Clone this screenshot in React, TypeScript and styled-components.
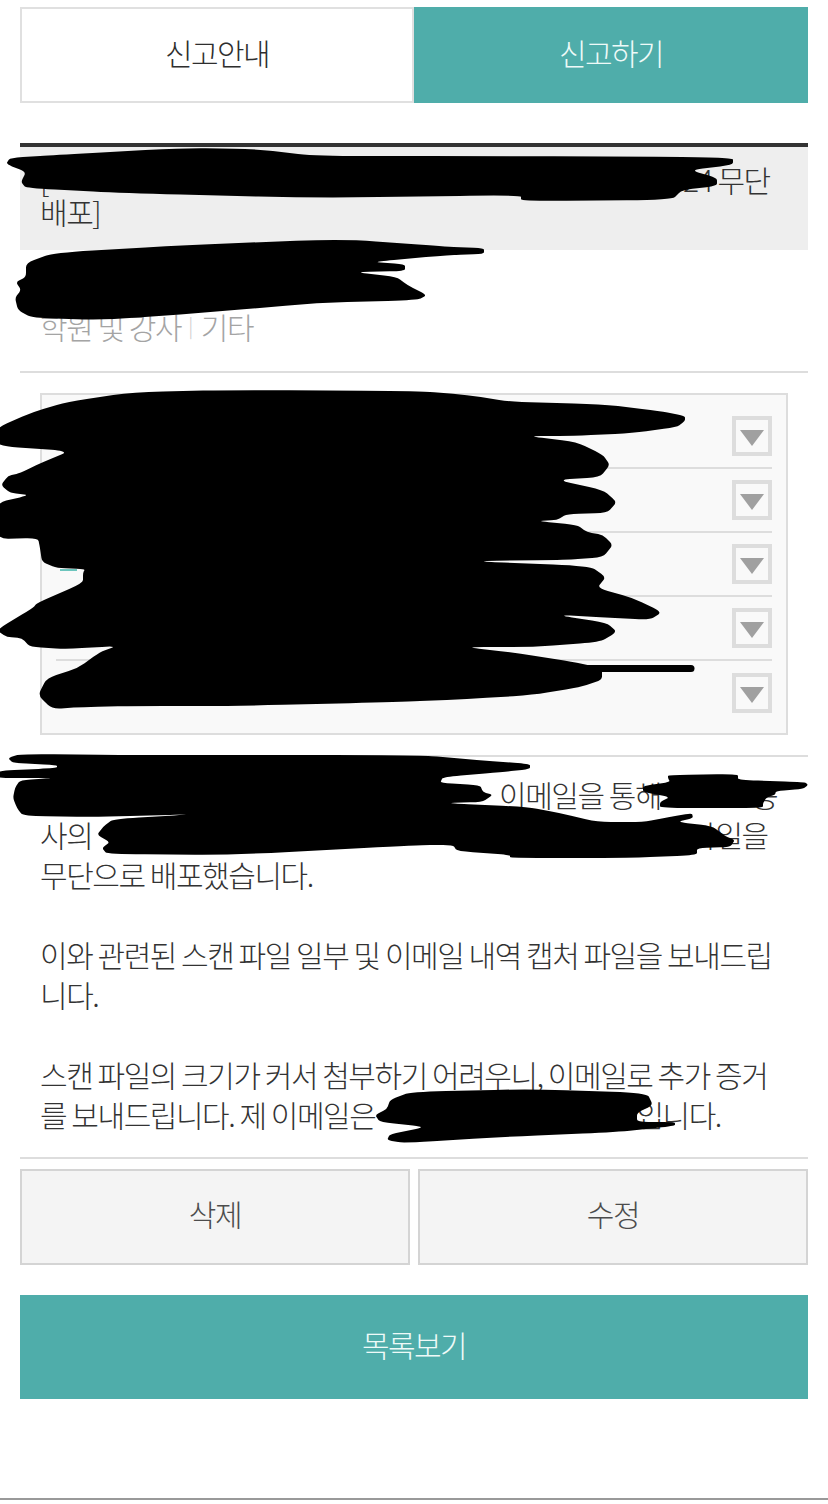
import styled, { createGlobalStyle } from "styled-components";

const GlobalStyle = createGlobalStyle`
  html, body {
    margin: 0;
    padding: 0;
    background: #fff;
  }
  * {
    box-sizing: border-box;
  }
`;

const Page = styled.div`
  position: relative;
  width: 828px;
  height: 1504px;
  overflow: hidden;
  padding: 7px 20px 0;
  display: flex;
  flex-direction: column;
  font-family: "Noto Sans CJK KR", "Noto Sans", sans-serif;
  font-weight: 300;
  color: #333;
  letter-spacing: -1.45px;
`;
const Tabs = styled.div`
  display: grid;
  grid-template-columns: 394px 394px;
  height: 96px;
`;
const Tab = styled.div<{ $active?: boolean }>`
  display: flex;
  align-items: center;
  justify-content: center;
  padding-bottom: 7px;
  font-size: 30px;
  letter-spacing: -1.6px;
  background: ${(p) => (p.$active ? "#4fadaa" : "#fff")};
  color: ${(p) => (p.$active ? "#eefaf8" : "#2e2e2e")};
  border: ${(p) => (p.$active ? "none" : "2px solid #e0e0e0")};
`;
const Title = styled.div`
  margin-top: 40px;
  height: 107px;
  border-top: 4px solid #333;
  background: #eee;
  padding: 16px 20px 0;
  font-size: 30px;
  line-height: 32px;
  white-space: nowrap;
`;
const Meta = styled.div`
  height: 123px;
  display: flex;
  align-items: flex-end;
  padding: 0 20px 25px;
  border-bottom: 2px solid #ddd;
  font-size: 30px;
  line-height: 40px;
  color: #a4a4a4;
`;
const Pipe = styled.span`
  margin: 0 9px 0 7px;
  font-size: 20px;
  vertical-align: 3px;
  color: #ccc;
`;
const SelectBox = styled.div`
  margin: 20px 20px 0;
  height: 342px;
  padding: 10px 14px 0;
  background: #f9f9f9;
  border: 2px solid #ddd;
`;
const SelectRow = styled.div<{ $last?: boolean }>`
  height: 64px;
  display: flex;
  align-items: center;
  justify-content: space-between;
  border-bottom: ${(p) => (p.$last ? "none" : "2px solid #ddd")};
`;
const RowMark = styled.span<{ $show?: boolean }>`
  width: 17px;
  height: 2px;
  margin: 12px 0 0 4px;
  background: ${(p) => (p.$show ? "#6cc5bd" : "transparent")};
`;
const Arrow = styled.div`
  width: 40px;
  height: 40px;
  display: flex;
  align-items: center;
  justify-content: center;
  border: 4px solid #ddd;
  &::after {
    content: "";
    border-left: 12px solid transparent;
    border-right: 12px solid transparent;
    border-top: 16px solid #a0a0a0;
    margin-top: 3px;
  }
`;
const Body = styled.div`
  margin-top: 20px;
  padding: 17px 20px 23px;
  border-top: 2px solid #ddd;
  border-bottom: 2px solid #ddd;
  font-size: 30px;
  line-height: 40px;
  white-space: nowrap;
`;
const Masked = styled.span<{ $w: number }>`
  display: inline-block;
  width: ${(p) => p.$w}px;
`;
const Actions = styled.div`
  margin-top: 10px;
  display: grid;
  grid-template-columns: 390px 390px;
  gap: 8px;
`;
const ActionButton = styled.div`
  height: 96px;
  display: flex;
  align-items: center;
  justify-content: center;
  padding-bottom: 8px;
  background: #f4f4f4;
  border: 2px solid #d4d4d4;
  font-size: 30px;
  color: #4c4c4c;
`;
const ListButton = styled.div`
  margin-top: 30px;
  height: 104px;
  display: flex;
  align-items: center;
  justify-content: center;
  padding-bottom: 7px;
  background: #4fadaa;
  color: #eefaf8;
  font-size: 30px;
  letter-spacing: -1.6px;
`;
const BottomRule = styled.div`
  position: absolute;
  left: 0;
  right: 0;
  top: 1498px;
  height: 2px;
  background: #999;
`;
const Scribbles = styled.svg`
  position: absolute;
  top: 0;
  left: 0;
  pointer-events: none;
`;

// marker scribbles, traced from the screenshot as x,y pairs
const blobs: number[][] = [
  // title
  [733,157, 476,156, 317,156, 254,149, 185,148, 53,155, 10,158, 6,164, 26,172, 21,182, 26,188, 122,193, 317,198, 521,195, 521,201, 672,200, 682,190, 717,186, 717,178, 690,170, 733,165],
  // meta
  [484,248, 450,247, 344,239, 185,245, 53,253, 26,263, 26,277, 16,282, 21,290, 15,298, 18,310, 32,318, 106,320, 212,312, 317,303, 418,300, 427,295, 407,285, 397,277, 354,272, 405,271, 405,264, 370,262, 450,255, 484,254],
  // select box
  [-4,428, 33,412, 67,402, 133,392, 233,390, 420,391, 467,395, 513,402, 600,404, 660,411, 685,416, 685,421, 677,427, 633,433, 573,436, 527,436, 577,442, 603,455, 610,465, 600,477, 557,480, 603,490, 617,502, 607,513, 567,514, 557,520, 537,521, 577,525, 587,532, 603,535, 613,545, 603,557, 567,560, 467,561, 590,566, 606,577, 597,588, 633,598, 662,612, 650,620, 600,617, 557,615, 607,623, 617,632, 600,642, 533,647, 463,647, 517,653, 573,662, 602,668, 602,680, 580,687, 533,695, 467,699, 400,702, 233,706, 133,706, 83,707, 52,709, 38,695, 47,678, 78,668, 100,652, 117,646, 67,649, 30,647, 22,638, 7,637, -4,630, 33,608, 37,603, 83,583, 83,573, 85,569, 57,568, 42,562, 40,548, 38,538, -4,539, -4,503, 30,495, 10,493, 1,485, 8,476, 20,473, 43,462, 70,451, -4,446],
  // body, left part
  [8,758, 20,754, 133,755, 420,755, 477,760, 530,764, 530,769, 503,772, 443,777, 440,783, 480,785, 483,792, 493,795, 482,802, 443,803, 527,807, 560,813, 597,822, 643,822, 670,817, 692,813, 693,818, 677,822, 712,826, 725,836, 735,840, 730,847, 697,848, 697,855, 630,858, 510,858, 510,855, 457,851, 453,845, 420,845, 233,855, 107,854, 102,848, 110,842, 97,835, 103,827, 113,819, 200,814, 100,817, 23,816, 17,808, 13,798, 15,788, 20,780, 57,778, -4,778, -4,771, 57,768, 57,765, 13,763],
  // body, right part
  [668,775, 738,774, 738,780, 805,782, 808,785, 803,789, 776,791, 775,795, 767,797, 763,803, 763,808, 660,808, 660,802, 670,797, 643,792, 643,786, 670,782, 668,778],
  // email
  [390,1100, 410,1092, 530,1089, 647,1093, 653,1105, 637,1113, 637,1122, 675,1122, 675,1126, 617,1132, 503,1137, 403,1143, 387,1140, 390,1134, 427,1127, 380,1122, 375,1115, 387,1109],
];

// rounds each corner with a short quadratic curve, straight in between
function smoothPath(pts: number[]) {
  const n = pts.length / 2;
  const t = 0.3;
  const at = (i: number, axis: number) => pts[((i + n) % n) * 2 + axis];
  let d = "";
  for (let i = 0; i < n; i++) {
    const x = at(i, 0);
    const y = at(i, 1);
    const inX = x + (at(i - 1, 0) - x) * t;
    const inY = y + (at(i - 1, 1) - y) * t;
    const outX = x + (at(i + 1, 0) - x) * t;
    const outY = y + (at(i + 1, 1) - y) * t;
    d += `${i === 0 ? "M" : "L"}${inX} ${inY} Q${x} ${y} ${outX} ${outY} `;
  }
  return d + "Z";
}

function App() {
  return (
    <>
      <GlobalStyle />
      <Page>
        <Tabs>
          <Tab>신고안내</Tab>
          <Tab $active>신고하기</Tab>
        </Tabs>
        <Title>
          [<Masked $w={635} />
          24 무단
          <br />
          배포]
        </Title>
        <Meta>
          학원 및 강사<Pipe>|</Pipe>기타
        </Meta>
        <SelectBox>
          {[0, 1, 2, 3, 4].map((i) => (
            <SelectRow key={i} $last={i === 4}>
              <RowMark $show={i === 2} />
              <Arrow />
            </SelectRow>
          ))}
        </SelectBox>
        <Body>
          <Masked $w={459} />
          이메일을 통해
          <Masked $w={90} />등
          <br />
          사의
          <Masked $w={597} />
          파일을
          <br />
          무단으로 배포했습니다.
          <br />
          <br />
          이와 관련된 스캔 파일 일부 및 이메일 내역 캡처 파일을 보내드립
          <br />
          니다.
          <br />
          <br />
          스캔 파일의 크기가 커서 첨부하기 어려우니, 이메일로 추가 증거
          <br />를 보내드립니다. 제 이메일은
          <Masked $w={261} />
          입니다.
        </Body>
        <Actions>
          <ActionButton>삭제</ActionButton>
          <ActionButton>수정</ActionButton>
        </Actions>
        <ListButton>목록보기</ListButton>
        <BottomRule />
        <Scribbles width="828" height="1504" viewBox="0 0 828 1504">
          {blobs.map((pts, i) => (
            <path key={i} d={smoothPath(pts)} fill="#000" />
          ))}
          <path d="M570 668.5H691" stroke="#000" strokeWidth="7" strokeLinecap="round" />
        </Scribbles>
      </Page>
    </>
  );
}

export default App;
